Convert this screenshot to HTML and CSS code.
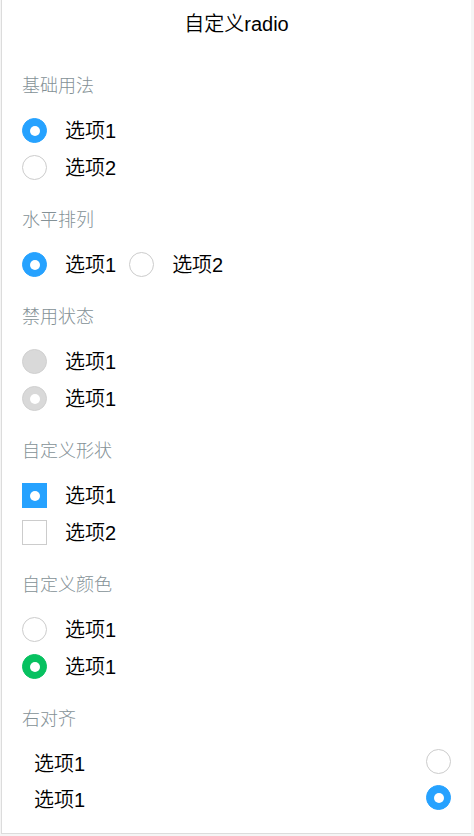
FILE: index.html
```html
<!DOCTYPE html>
<html lang="zh-CN">
<head>
<meta charset="utf-8">
<meta name="viewport" content="width=device-width, initial-scale=1">
<title>自定义radio</title>
<link rel="stylesheet" href="styles.css">
</head>
<body>
<main class="page">
  <h1 class="title">自定义radio</h1>
  <section class="group">
    <h2 class="heading">基础用法</h2>
    <div class="options">
      <label class="option"><input class="radio" type="radio" name="basic" checked><span>选项1</span></label>
      <label class="option"><input class="radio" type="radio" name="basic"><span>选项2</span></label>
    </div>
  </section>
  <section class="group">
    <h2 class="heading">水平排列</h2>
    <div class="options options-inline">
      <label class="option"><input class="radio" type="radio" name="inline" checked><span>选项1</span></label>
      <label class="option"><input class="radio" type="radio" name="inline"><span>选项2</span></label>
    </div>
  </section>
  <section class="group">
    <h2 class="heading">禁用状态</h2>
    <div class="options">
      <label class="option"><input class="radio" type="radio" name="disabled" disabled><span>选项1</span></label>
      <label class="option"><input class="radio" type="radio" name="disabled" disabled checked><span>选项1</span></label>
    </div>
  </section>
  <section class="group">
    <h2 class="heading">自定义形状</h2>
    <div class="options">
      <label class="option"><input class="radio radio-square" type="radio" name="shape" checked><span>选项1</span></label>
      <label class="option"><input class="radio radio-square" type="radio" name="shape"><span>选项2</span></label>
    </div>
  </section>
  <section class="group">
    <h2 class="heading">自定义颜色</h2>
    <div class="options">
      <label class="option"><input class="radio radio-green" type="radio" name="color"><span>选项1</span></label>
      <label class="option"><input class="radio radio-green" type="radio" name="color" checked><span>选项1</span></label>
    </div>
  </section>
  <section class="group">
    <h2 class="heading heading-right">右对齐</h2>
    <div class="options options-right">
      <label class="option"><span>选项1</span><input class="radio" type="radio" name="right"></label>
      <label class="option"><span>选项1</span><input class="radio" type="radio" name="right" checked></label>
    </div>
  </section>
</main>
</body>
</html>
```

FILE: styles.css
```css
* {
  box-sizing: border-box;
}

body {
  margin: 0;
  background: #f5f5f5;
  color: #000;
  font-family: "Liberation Sans", "Noto Sans CJK SC", sans-serif;
  font-size: 20px;
  font-weight: 350;
}

.page {
  margin: 0 3px 2px 1px;
  padding: 0 20px 18px;
  background: #fff;
  border: 1px solid #dcdcdc;
  border-width: 0 0 1px 1px;
}

.title {
  margin: 0 0 25px;
  font-size: 20px;
  font-weight: 350;
  line-height: 48px;
  text-align: center;
}

.group + .group {
  margin-top: 25px;
}

.heading {
  margin: 0 0 19px;
  color: #849196;
  font-size: 18px;
  font-weight: 300;
  line-height: 26px;
}

.heading-right {
  margin-bottom: 17px;
}

.options {
  display: flex;
  flex-direction: column;
  gap: 10px;
}

.options-inline {
  flex-direction: row;
  gap: 13px;
}

.option {
  display: flex;
  align-items: flex-start;
  gap: 18px;
  line-height: 27px;
}

.options-right {
  gap: 6px;
  padding-left: 12px;
}

.options-right .option {
  justify-content: space-between;
  line-height: 30px;
}

.radio {
  appearance: none;
  flex: none;
  width: 25px;
  height: 25px;
  margin: 0;
  background: #fff;
  border: 1px solid #ccc;
  border-radius: 50%;
}

.radio:checked {
  background: #26a2ff;
  border-color: #26a2ff;
}

.radio:checked::before {
  content: "";
  display: block;
  width: 10px;
  height: 10px;
  margin: 7px;
  background: #fff;
  border-radius: 50%;
}

.radio:disabled {
  background: #d9d9d9;
  border-color: #d0d0d0;
}

.radio-square {
  border-radius: 0;
}

.radio-green:checked {
  background: #07c160;
  border-color: #07c160;
}
```
